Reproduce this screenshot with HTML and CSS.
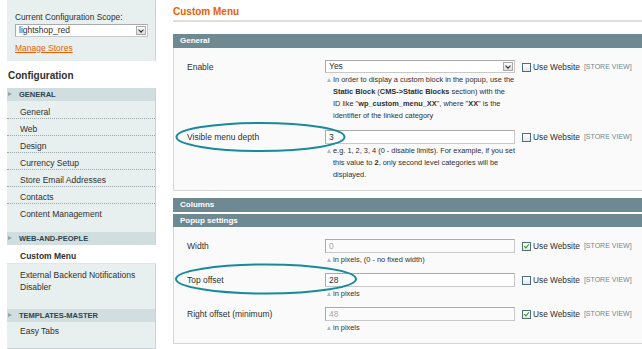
FILE: index.html
```html
<!DOCTYPE html>
<html lang="en">
<head>
    <meta charset="UTF-8">
    <meta name="viewport" content="width=device-width, initial-scale=1.0">
    <title>Custom Menu - Configuration</title>
    <link rel="stylesheet" href="styles.css">
</head>
<body>
    <div class="page">
        <aside class="side">
            <div class="scope">
                <p class="scope_label">Current Configuration Scope:</p>
                <div class="select scope_select"><span>lightshop_red</span><i class="arrow"></i></div>
                <a href="javascript:void(0)" class="manage">Manage Stores</a>
            </div>
            <h3 class="side_title">Configuration</h3>
            <div class="tabs">
                <div class="tab_head">GENERAL</div>
                <ul class="tab_list first">
                    <li>General</li>
                    <li>Web</li>
                    <li>Design</li>
                    <li>Currency Setup</li>
                    <li>Store Email Addresses</li>
                    <li>Contacts</li>
                    <li>Content Management</li>
                </ul>
                <div class="tab_head">WEB-AND-PEOPLE</div>
                <ul class="tab_list">
                    <li class="on">Custom Menu</li>
                    <li class="long">External Backend Notifications Disabler</li>
                </ul>
                <div class="tab_head">TEMPLATES-MASTER</div>
                <ul class="tab_list last">
                    <li>Easy Tabs</li>
                </ul>
            </div>
        </aside>

        <main class="main">
            <h2 class="page_title">Custom Menu</h2>

            <div class="section_head">General</div>
            <div class="fieldset">
                <div class="row">
                    <div class="label">Enable</div>
                    <div class="value">
                        <div class="select"><span>Yes</span><i class="arrow"></i></div>
                        <p class="note">In order to display a custom block in the popup, use the<br><b>Static Block</b> (<b>CMS-&gt;Static Blocks</b> section) with the<br>ID like "<b>wp_custom_menu_XX</b>", where "<b>XX</b>" is the<br>identifier of the linked category</p>
                    </div>
                    <div class="use"><span class="check"></span>Use Website <span class="store">[STORE VIEW]</span></div>
                </div>
                <div class="row">
                    <div class="label">Visible menu depth</div>
                    <div class="value">
                        <div class="input">3</div>
                        <p class="note">e.g. 1, 2, 3, 4 (0 - disable limits). For example, if you set<br>this value to <b>2</b>, only second level categories will be<br>displayed.</p>
                    </div>
                    <div class="use"><span class="check"></span>Use Website <span class="store">[STORE VIEW]</span></div>
                </div>
            </div>

            <div class="section_head">Columns</div>
            <div class="section_head">Popup settings</div>
            <div class="fieldset popup">
                <div class="row">
                    <div class="label">Width</div>
                    <div class="value">
                        <div class="input off">0</div>
                        <p class="note">in pixels, (0 - no fixed width)</p>
                    </div>
                    <div class="use"><span class="check checked"></span>Use Website <span class="store">[STORE VIEW]</span></div>
                </div>
                <div class="row">
                    <div class="label">Top offset</div>
                    <div class="value">
                        <div class="input">28</div>
                        <p class="note">in pixels</p>
                    </div>
                    <div class="use"><span class="check"></span>Use Website <span class="store">[STORE VIEW]</span></div>
                </div>
                <div class="row">
                    <div class="label">Right offset (minimum)</div>
                    <div class="value">
                        <div class="input off">48</div>
                        <p class="note">in pixels</p>
                    </div>
                    <div class="use"><span class="check checked"></span>Use Website <span class="store">[STORE VIEW]</span></div>
                </div>
            </div>
        </main>
    </div>

    <!-- hand drawn marks over the screenshot -->
    <svg class="marks" width="642" height="349" viewBox="0 0 642 349">
        <ellipse cx="260.5" cy="137" rx="84" ry="14" />
        <ellipse cx="266" cy="279" rx="90" ry="14.5" />
    </svg>
</body>
</html>
```

FILE: styles.css
```css
* {margin: 0; padding: 0; box-sizing: border-box;}
body {
    background-color: #fff;
    font-family: "Liberation Sans", Arial, sans-serif;
    font-size: 8.5px;
    color: #2f2f2f;
    overflow: hidden;
    width: 642px;
    height: 349px;
    position: relative;
}
ul {list-style: none;}

.page {
    display: flex;
    align-items: flex-start;
}

/* side */
.side {
    width: 156px;
    flex-shrink: 0;
}

.scope {
    margin-left: 7px;
    height: 61px;
    padding: 12px 0 0 8px;
    background-color: #e7efef;
    border-right: 1px solid #c9d3d5;
}

.scope_label {
    font-size: 8.3px;
    line-height: 10px;
}

.select {
    position: relative;
    height: 13px;
    margin-top: 2px;
    padding: 0 0 0 3px;
    background-color: #fff;
    border: 1px solid;
    border-color: #aaa #c8c8c8 #c8c8c8 #aaa;
    line-height: 11px;
    font-size: 8.5px;
    color: #2f2f2f;
}

.scope_select {
    width: 133px;
}

.select .arrow {
    position: absolute;
    right: 1px;
    top: 1px;
    width: 10px;
    height: 9px;
    background: linear-gradient(#fdfdfd, #dcdcdc);
    border: 1px solid #a9a9a9;
}

.select .arrow::after {
    content: "";
    position: absolute;
    left: 2px;
    top: 1px;
    width: 3px;
    height: 3px;
    border-right: 1.5px solid #222;
    border-bottom: 1.5px solid #222;
    transform: rotate(45deg);
}

.manage {
    display: block;
    margin-top: 6px;
    color: #eb5e00;
    font-size: 8.5px;
    line-height: 10px;
}

.side_title {
    height: 27px;
    padding: 3px 0 0 8px;
    font-size: 10px;
    line-height: 24px;
    color: #2f2f2f;
}

.tabs {
    margin-left: 7px;
    background-color: #e7efef;
    border-right: 1px solid #c9d3d5;
    border-bottom: 1px solid #c9d3d5;
}

.tab_head {
    position: relative;
    height: 13px;
    padding-left: 12px;
    background-color: #d1dedf;
    color: #2d444f;
    font-size: 7.5px;
    font-weight: bold;
    line-height: 13px;
}

.tab_head::before {
    content: "";
    position: absolute;
    left: 1px;
    top: 4px;
    border-left: 4px solid #8fa4ab;
    border-top: 2.5px solid transparent;
    border-bottom: 2.5px solid transparent;
}

.tab_list {
    padding-bottom: 11px;
}

.tab_list.first {
    padding-top: 1px;
    padding-bottom: 12px;
}

.tab_list li {
    padding: 5px 0 1px 13px;
    line-height: 10px;
    border-bottom: 1px dotted #9aa6a8;
}

.tab_list li:last-child {
    border-bottom: 0;
}

.tab_list li.on {
    background-color: #fff;
    font-weight: bold;
    margin-right: -1px;
    padding-top: 6px;
    padding-bottom: 2px;
    border-bottom: 1px solid #dfe6e7;
}

.tab_list li.long {
    padding: 5px 4px 5px 13px;
    line-height: 12px;
}

.tab_list.last li {
    padding-top: 4px;
}

/* main */
.main {
    width: 500px;
    flex-shrink: 0;
    margin-left: 17px;
}

.page_title {
    padding-top: 6px;
    height: 22px;
    font-size: 10px;
    line-height: 12px;
    color: #eb5e00;
    border-bottom: 2px solid #dedede;
}

.section_head {
    height: 14px;
    margin-top: 2px;
    padding-left: 7px;
    background-color: #6f8992;
    color: #fff;
    font-size: 8px;
    font-weight: bold;
    line-height: 14px;
}

.page_title + .section_head {
    margin-top: 12px;
}

.fieldset + .section_head {
    margin-top: 7px;
}

.section_head + .section_head {
    height: 13px;
    line-height: 13px;
}

.fieldset {
    padding: 12px 0 9px 13px;
    background-color: #fafafa;
    border: 1px solid #d6d6d6;
    border-top: 0;
}

.row {
    display: grid;
    grid-template-columns: 138px 190px auto;
    margin-bottom: 8px;
}

.popup .row {
    margin-bottom: 7px;
}

.row:last-child,
.popup .row:last-child {
    margin-bottom: 0;
}

.label {
    padding-top: 1px;
    line-height: 12px;
}

.value .select {
    margin-top: 0;
}

.input {
    height: 14px;
    padding-left: 3px;
    background-color: #fff;
    border: 1px solid;
    border-color: #aaa #c8c8c8 #c8c8c8 #aaa;
    line-height: 12px;
}

.input.off {
    color: #a8a8a8;
    background-color: #fbfbfb;
}

.note {
    position: relative;
    padding-left: 8px;
    margin-top: 1px;
    font-size: 7.4px;
    line-height: 12px;
    color: #2f2f2f;
}

.note::before {
    content: "";
    position: absolute;
    left: 2px;
    top: 4px;
    border-bottom: 4px solid #a9bcc2;
    border-left: 2.5px solid transparent;
    border-right: 2.5px solid transparent;
}

.use {
    display: flex;
    align-items: flex-start;
    padding: 1px 0 0 7px;
    line-height: 12px;
    font-size: 8.3px;
    white-space: nowrap;
}

.check {
    width: 9px;
    height: 9px;
    margin: 2px 2px 0 0;
    border: 1px solid #4e6e7e;
    background: linear-gradient(#fff, #e6e6e6);
    position: relative;
}

.check.checked::after {
    content: "";
    position: absolute;
    left: 2px;
    top: 0;
    width: 2px;
    height: 4px;
    border-right: 1.5px solid #2a9a1a;
    border-bottom: 1.5px solid #2a9a1a;
    transform: rotate(40deg);
}

.store {
    margin-left: 4px;
    font-size: 7px;
    color: #6f8992;
}

/* marks */
.marks {
    position: absolute;
    left: 0;
    top: 0;
    pointer-events: none;
}

.marks ellipse {
    fill: none;
    stroke: #178a9b;
    stroke-width: 2;
}
```
